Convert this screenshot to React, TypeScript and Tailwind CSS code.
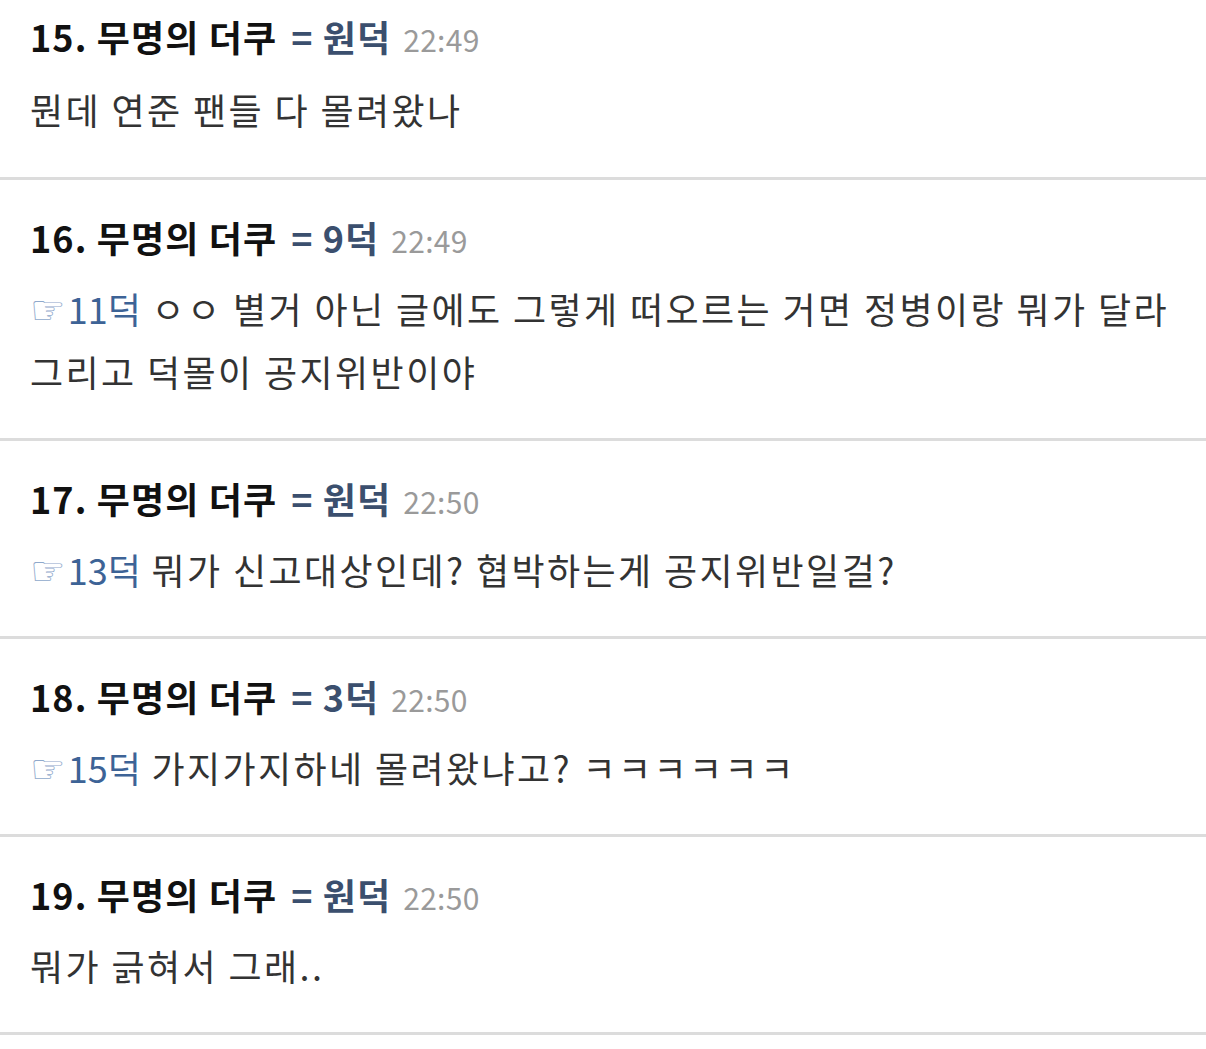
const FONT = "font-['Noto_Sans_CJK_KR','Noto_Sans',sans-serif]";

type Comment = {
  no: number;
  nick: string;
  time: string;
  reply?: string;
  text: string;
};

const comments: Comment[] = [
  { no: 15, nick: "원덕", time: "22:49", text: "뭔데 연준 팬들 다 몰려왔나" },
  {
    no: 16,
    nick: "9덕",
    time: "22:49",
    reply: "11덕",
    text: "ㅇㅇ 별거 아닌 글에도 그렇게 떠오르는 거면 정병이랑 뭐가 달라 그리고 덕몰이 공지위반이야",
  },
  {
    no: 17,
    nick: "원덕",
    time: "22:50",
    reply: "13덕",
    text: "뭐가 신고대상인데? 협박하는게 공지위반일걸?",
  },
  {
    no: 18,
    nick: "3덕",
    time: "22:50",
    reply: "15덕",
    text: "가지가지하네 몰려왔냐고? ㅋㅋㅋㅋㅋㅋ",
  },
  { no: 19, nick: "원덕", time: "22:50", text: "뭐가 긁혀서 그래.." },
];

const CommentRow = ({ c, first }: { c: Comment; first: boolean }) => (
  <div
    className={`${first ? "pt-[12px] pb-[36px]" : "pt-[33px] pb-[35px]"} pl-[30px] pr-[20px] border-b-[3px] border-[#dcdcdc]`}
  >
    {/* header */}
    <div className="flex items-baseline h-[48px] leading-[48px] whitespace-nowrap">
      <span className="text-[36px] font-bold text-[#111] tracking-[1.1px]">
        {c.no}. 무명의 더쿠
      </span>
      <span className="ml-[14px] text-[36px] font-bold text-[#3b4f6e] tracking-[1.1px]">
        = {c.nick}
      </span>
      <span className="ml-[12px] text-[30px] text-[#9a9a9a] tracking-[0.3px]">
        {c.time}
      </span>
    </div>

    {/* body */}
    <p
      className={`${first ? "mt-[18px]" : "mt-[16px]"} text-[36px] leading-[63px] text-[#333] tracking-[2.4px]`}
    >
      {c.reply && (
        <span className="text-[#3d6396] tracking-[0px]">
          <span className="inline-block leading-none text-[40px] text-[#8fa9cc] font-['DejaVu_Sans',sans-serif] mr-[2px]">
            ☞
          </span>
          {c.reply}
        </span>
      )}
      {c.reply ? " " : ""}
      {c.text}
    </p>
  </div>
);

export default function App() {
  return (
    <div className={`w-[1206px] h-[1049px] bg-white overflow-hidden ${FONT}`}>
      {comments.map((c, i) => (
        <CommentRow key={c.no} c={c} first={i === 0} />
      ))}
    </div>
  );
}
